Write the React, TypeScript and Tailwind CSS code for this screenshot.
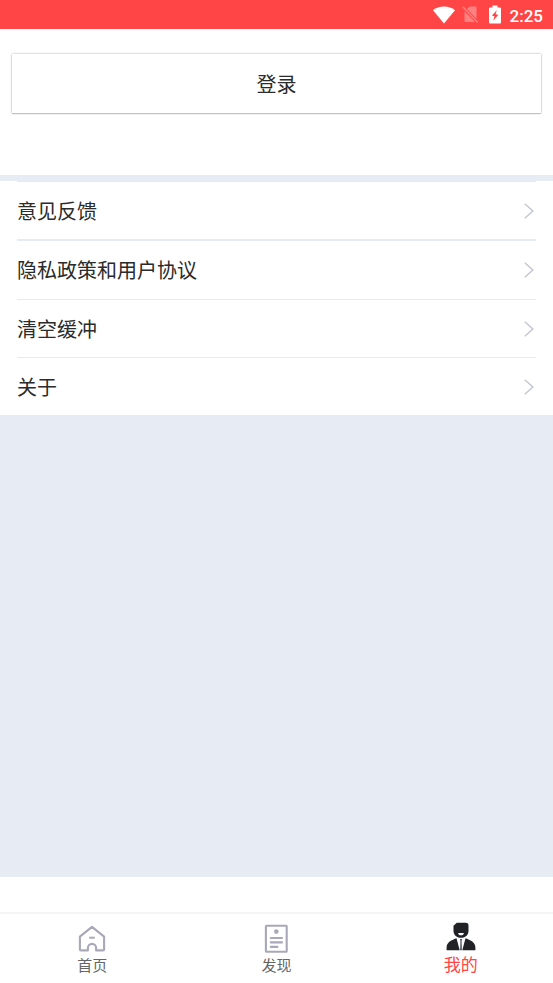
import { clsx } from "clsx";

const menuItems = [
  { label: "意见反馈", row: "border-t pb-0" },
  { label: "隐私政策和用户协议", row: "border-t-2 pb-px" },
  { label: "清空缓冲", row: "border-t pb-0" },
  { label: "关于", row: "border-t pb-0" },
];

const StatusBar = () => {
  return (
    <header className="flex h-[29px] shrink-0 items-center justify-end bg-[#ff4545] pr-2.5 text-white">
      <svg width="22" height="18" viewBox="0 0 22 18" fill="currentColor">
        <path d="M0 4.200C3 1.800 6.900 .5 11 .5s8 1.300 11 3.700L11 17.600z" />
      </svg>
      <svg className="ml-[7px]" width="17" height="19" viewBox="0 0 17 19">
        <path
          d="M7.500 1.500H13.500a1 1 0 0 1 1 1V13.800L5 4zM2.500 6.200l10.500 10.800H3.500a1 1 0 0 1-1-1z"
          fill="#ff8181"
        />
        <path d="M.8 1.800 15.800 17.500" stroke="#ff8181" strokeWidth="1.400" />
      </svg>
      <svg className="ml-2.5" width="12" height="19" viewBox="0 0 12 19">
        <path
          d="M3.500 .5h5v2H11a1 1 0 0 1 1 1V17.500a1 1 0 0 1-1 1H1a1 1 0 0 1-1-1V3.500a1 1 0 0 1 1-1h2.500z"
          fill="#fff"
        />
        <path d="M7.900 4.900 3 10.600l2.500.8-1.300 4.300 5-5.800-2.600-.8z" fill="#ff4545" />
      </svg>
      <span className="ml-[9px] pt-0.5 font-['Roboto',sans-serif] text-[17px] leading-5 font-medium">
        2:25
      </span>
    </header>
  );
};

const Chevron = () => {
  return (
    <svg width="10" height="16" viewBox="0 0 10 16" fill="none">
      <path d="M.8 .8 8.800 8 .8 15.200" stroke="#c6c6d2" strokeWidth="1.500" />
    </svg>
  );
};

const HomeIcon = () => {
  return (
    <svg width="28" height="30" viewBox="0 0 28 30" fill="none">
      <path
        d="M14 3.900 1.900 13.600V26.400a1 1 0 0 0 1 1H9.900V25a4.100 4.100 0 0 1 8.200 0v2.400h7a1 1 0 0 0 1-1V13.600z"
        stroke="#a9a8b8"
        strokeWidth="2.100"
        strokeLinejoin="round"
      />
      <path d="M11.200 14.700h5.600" stroke="#a9a8b8" strokeWidth="2" />
    </svg>
  );
};

const DiscoverIcon = () => {
  return (
    <svg width="28" height="30" viewBox="0 0 28 30" fill="none">
      <rect
        x="3.900"
        y="2.800"
        width="20.800"
        height="26"
        rx=".6"
        stroke="#a9a8b8"
        strokeWidth="2.100"
      />
      <circle cx="14.300" cy="8.600" r="2.300" fill="#a9a8b8" />
      <path
        d="M8.800 15h11.200M8.800 19.400h11.200M8.800 23.900h6.600"
        stroke="#a9a8b8"
        strokeWidth="2.100"
        strokeLinecap="round"
      />
    </svg>
  );
};

const ProfileIcon = () => {
  return (
    <svg width="30" height="30" viewBox="0 0 30 30">
      <path
        d="M10.800 .7h8.900a2.800 2.800 0 0 1 2.800 2.800V9c0 3.700-2.700 6.800-7.500 6.800S7.500 12.700 7.500 9V3.800z"
        fill="#202226"
      />
      <path d="M12.200 11h5.600c0 1.700-1.100 2.300-2.800 2.300s-2.800-.6-2.800-2.300z" fill="#fff" />
      <path
        d="M10.500 16.200 13.700 28.300H.6V25.500C.6 20.200 4.800 18.600 10.500 16.200zM19.500 16.200 16.300 28.300H29.400V25.500c0-5.300-4.200-6.900-9.900-9.300z"
        fill="#202226"
      />
      <path d="M13.900 17h2.200l-.5 1.900.3 9.400h-1.800l.3-9.400z" fill="#4a5560" />
    </svg>
  );
};

const tabs = [
  { label: "首页", icon: HomeIcon, active: false },
  { label: "发现", icon: DiscoverIcon, active: false },
  { label: "我的", icon: ProfileIcon, active: true },
];

const TabBar = () => {
  return (
    <nav className="grid h-[71px] shrink-0 grid-cols-3 border-t-2 border-[#f5f5f5] bg-white">
      {tabs.map(({ label, icon: Icon, active }) => (
        <a
          key={label}
          href="#"
          aria-current={active ? "page" : undefined}
          className={clsx(
            "flex flex-col items-center",
            active
              ? "pt-2 text-[17px] leading-6 text-[#ff4545]"
              : "pt-[9px] text-[15px] leading-6 text-[#666]"
          )}
        >
          <Icon />
          <span>{label}</span>
        </a>
      ))}
    </nav>
  );
};

const App = () => {
  return (
    <div className="flex min-h-screen flex-col bg-white font-['Noto_Sans_CJK_SC',sans-serif] text-[#2b2b2b]">
      <StatusBar />
      <section className="px-3 pt-[25px] pb-[62px]">
        <button
          type="button"
          className="h-[59px] w-full bg-white text-xl shadow-[0_0_2px_rgba(0,0,0,0.35),0_1px_1px_rgba(0,0,0,0.15)]"
        >
          登录
        </button>
      </section>
      <main className="flex flex-1 flex-col bg-[#e7ecf4] pt-1.5">
        <ul className="bg-white px-[17px]">
          {menuItems.map((item) => (
            <li key={item.label} className={clsx("border-[#e7ecf4]", item.row)}>
              <button
                type="button"
                className="flex h-[57px] w-full items-center justify-between pr-0.5 text-left text-xl"
              >
                <span>{item.label}</span>
                <Chevron />
              </button>
            </li>
          ))}
        </ul>
      </main>
      <div className="h-[35px] shrink-0" />
      <TabBar />
    </div>
  );
};

export default App;
